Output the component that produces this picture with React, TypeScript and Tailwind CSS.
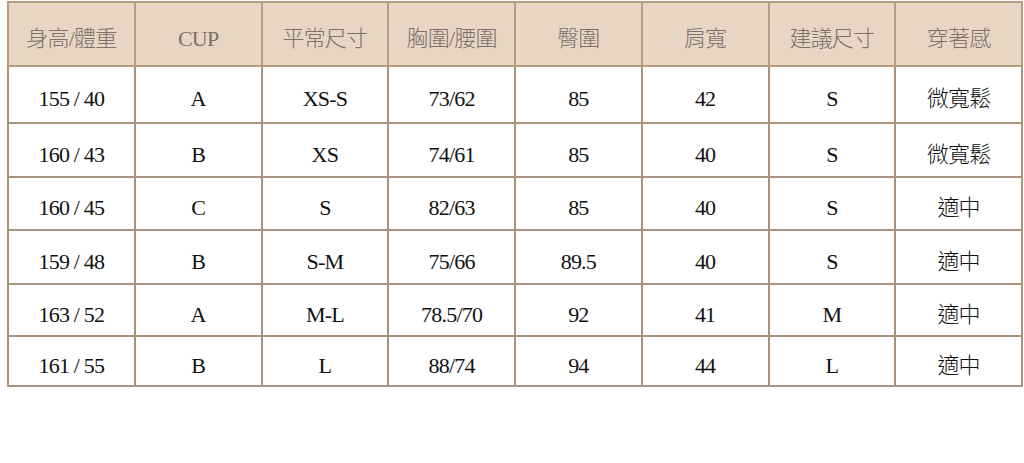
const headers = ["身高/體重", "CUP", "平常尺寸", "胸圍/腰圍", "臀圍", "肩寬", "建議尺寸", "穿著感"]

const rows = [
  ["155 / 40", "A", "XS-S", "73/62", "85", "42", "S", "微寬鬆"],
  ["160 / 43", "B", "XS", "74/61", "85", "40", "S", "微寬鬆"],
  ["160 / 45", "C", "S", "82/63", "85", "40", "S", "適中"],
  ["159 / 48", "B", "S-M", "75/66", "89.5", "40", "S", "適中"],
  ["163 / 52", "A", "M-L", "78.5/70", "92", "41", "M", "適中"],
  ["161 / 55", "B", "L", "88/74", "94", "44", "L", "適中"],
]

const rowHeights = ["h-[57px]", "h-[54px]", "h-[53px]", "h-[54px]", "h-[52px]", "h-[50px]"]

export default function App() {
  return (
    <div className="w-[1024px] h-[463px] bg-white pl-[7px] pt-[1px] font-['Liberation_Serif','Noto_Sans_CJK_TC',serif] font-light">
      <table className="w-[1016px] border-collapse table-fixed text-[22px] tracking-[-0.8px]">
        <thead>
          <tr className="h-[64px] bg-[#e8d6c5] text-[#7d716a]">
            {headers.map((h) => (
              <th key={h} className="border-2 border-[#b89a80] font-light text-center align-middle pt-[8px]">
                {h}
              </th>
            ))}
          </tr>
        </thead>
        <tbody>
          {rows.map((r, i) => (
            <tr key={i} className={rowHeights[i]}>
              {r.map((c, j) => (
                <td key={j} className="border-2 border-[#a8947e] text-center align-middle text-[#111] pt-[8px] p-0">
                  {c}
                </td>
              ))}
            </tr>
          ))}
        </tbody>
      </table>
    </div>
  )
}
